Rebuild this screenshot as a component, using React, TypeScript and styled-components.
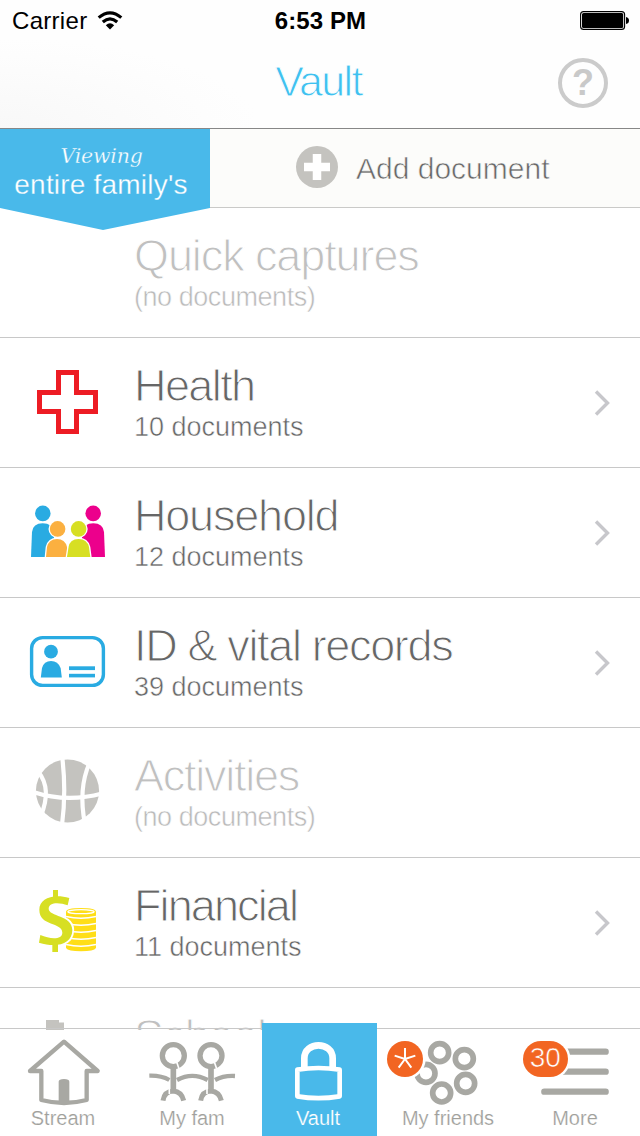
import React from "react";
import styled, { createGlobalStyle } from "styled-components";

const BLUE = "#49b9ea";
const GREY = "#a8a8a3";

const GlobalStyle = createGlobalStyle`
  * { box-sizing: border-box; }
  body {
    margin: 0;
    background: #fff;
    font-family: "Liberation Sans", Arial, sans-serif;
  }
  svg { display: block; overflow: visible; }
`;

const Screen = styled.div`
  position: relative;
  width: 640px;
  height: 1136px;
  overflow: hidden;
  background: #fff;
`;

/* A light cut of the face: the outline is trimmed with the surface colour. */
const LightText = styled.span<{
  $size: number;
  $line: number;
  $color: string;
  $trim?: number;
  $surface?: string;
  $spacing?: number;
}>`
  display: block;
  white-space: nowrap;
  font-size: ${(p) => p.$size}px;
  line-height: ${(p) => p.$line}px;
  color: ${(p) => p.$color};
  letter-spacing: ${(p) => p.$spacing ?? 0}px;
  -webkit-text-stroke: ${(p) => p.$trim ?? 0}px ${(p) => p.$surface ?? "#fff"};
`;

const Header = styled.header`
  height: 129px;
  border-bottom: 1px solid #878787;
  background: radial-gradient(ellipse 260px 90px at 0 128px, #f8f8f8, #fdfdfd 80%, #fefefe);
`;

const StatusBar = styled.div`
  display: grid;
  grid-template-columns: 1fr auto 1fr;
  align-items: center;
  height: 40px;
  padding: 0 11px 0 12px;
`;

const Carrier = styled.div`
  display: flex;
  align-items: center;
  gap: 10px;
  font-size: 24px;
  line-height: 41px;
  color: #000;
  letter-spacing: 0.3px;
`;

const Clock = styled.div`
  font-size: 24px;
  font-weight: 700;
  line-height: 41px;
  letter-spacing: 0.1px;
`;

const BatterySlot = styled.div`
  display: flex;
  justify-content: flex-end;
`;

const NavBar = styled.div`
  display: grid;
  grid-template-columns: 1fr auto 1fr;
  align-items: center;
  height: 86px;
  padding: 0 32px;
`;

const NavTitle = styled(LightText)`
  padding: 0 3px 4px 0;
`;

const HelpButton = styled.button`
  justify-self: end;
  width: 50px;
  height: 50px;
  padding: 0;
  border: 4px solid #cbcbcb;
  border-radius: 50%;
  background: transparent;
  color: #c9c9c9;
  font: 700 36px/42px "Liberation Sans", Arial, sans-serif;
`;

const Toolbar = styled.div`
  display: flex;
  height: 79px;
  border-bottom: 1px solid #cacac8;
  background: #fcfcfa;
`;

const Ribbon = styled.div`
  z-index: 1;
  width: 210px;
  height: 101px;
  padding-top: 13px;
  background: ${BLUE};
  clip-path: polygon(0 0, 100% 0, 100% 79px, 103px 100%, 0 79px);
  text-align: center;
`;

const RibbonCaption = styled(LightText)`
  padding-right: 7px;
  font-family: "DejaVu Serif", serif;
  font-style: italic;
`;

const RibbonName = styled(LightText)`
  padding-right: 8px;
`;

const AddButton = styled.div`
  display: flex;
  align-items: center;
  gap: 18px;
  padding: 0 0 2px 86px;
`;

const AddLabel = styled(LightText)`
  padding-top: 3px;
`;

const Row = styled.div`
  display: flex;
  height: 130px;
  border-bottom: 1px solid #c8c8c8;
`;

const RowIcon = styled.div`
  width: 134px;
  height: 129px;
`;

const RowText = styled.div`
  flex: 1;
  padding-top: 23px;
`;

const ChevronSlot = styled.div`
  width: 47px;
  padding-top: 51px;
`;

const TabBar = styled.nav`
  position: absolute;
  left: 0;
  bottom: 0;
  display: flex;
  align-items: flex-end;
  width: 640px;
  height: 108px;
  border-top: 1px solid #c8c8c8;
  background: linear-gradient(transparent 1px, #fff 1px);
`;

const Tab = styled.div<{ $width: number; $active?: boolean; $shift?: number }>`
  position: relative;
  width: ${(p) => p.$width}px;
  height: ${(p) => (p.$active ? 113 : 107)}px;
  padding-top: ${(p) => (p.$active ? 6 : 0)}px;
  flex: none;
  background: ${(p) => (p.$active ? BLUE : "transparent")};
  text-align: center;
  & > span:last-child { padding-right: ${(p) => p.$shift ?? 0}px; }
`;

const CountBadge = styled.div`
  position: absolute;
  left: 4px;
  top: 12px;
  width: 44.5px;
  height: 36px;
  border-radius: 18px;
  background: #f26522;
  box-shadow: 0 0 0 2.5px #fff;
`;

const Wifi = () => (
  <svg width="26" height="20" viewBox="0 0 26 20">
    <g fill="none" stroke="#000" strokeWidth="3.2">
      <path d="M1.7 6.6 Q13 -3 24.3 6.6" />
      <path d="M5.8 11 Q13 4.6 20.2 11" />
    </g>
    <path d="M8.8 14.2 Q13 10.4 17.2 14.2 L13 18.6 Z" />
  </svg>
);

const Battery = () => (
  <svg width="49" height="19" viewBox="0 0 49 19">
    <rect x="0.6" y="0.6" width="44" height="17.8" rx="3" fill="none" stroke="#000" strokeWidth="1.1" />
    <rect x="2" y="2" width="41.2" height="15" rx="1.6" />
    <path d="M46 6 Q49 6.5 49 9.5 T46 13 Z" />
  </svg>
);

const Plus = () => (
  <svg width="42" height="42" viewBox="0 0 42 42">
    <circle cx="21" cy="21" r="21" fill="#c4c3bf" />
    <path d="M21 8V34M8 21H34" stroke="#fff" strokeWidth="8.5" />
  </svg>
);

const Chevron = () => (
  <svg width="18" height="28" viewBox="0 0 18 28">
    <path d="M3 2.5 L14.5 14 L3 25.5" fill="none" stroke="#c7c7cb" strokeWidth="3.4" />
  </svg>
);

const Glyph = ({ top, children }: { top: number; children?: React.ReactNode }) => (
  <svg width="134" height="129" viewBox={`0 ${top} 134 129`}>{children}</svg>
);

const HealthIcon = () => (
  <Glyph top={338}>
    <path
      d="M58.5 372.5H76.5V392.5H95.5V411.5H76.5V431.5H58.5V411.5H39.5V392.5H58.5Z"
      fill="none"
      stroke="#ed1c24"
      strokeWidth="5"
    />
  </Glyph>
);

const HouseholdIcon = () => (
  <Glyph top={468}>
    <g fill="#29abe2">
      <circle cx="42.8" cy="513.4" r="7.8" />
      <path d="M31 557 L32 532 Q33 523.3 42.7 523.3 T54 532 V557Z" />
    </g>
    <g fill="#ec008c">
      <circle cx="93.2" cy="513.4" r="7.8" />
      <path d="M105 557 L104 532 Q103 523.3 93.3 523.3 T82 532 V557Z" />
    </g>
    <g fill="#fbb040" stroke="#fff" strokeWidth="2.6" paintOrder="stroke">
      <path d="M46 557 L47 547 Q49 539 57 539 T67 547 L68 557Z" />
      <circle cx="57.6" cy="528.9" r="7.8" />
    </g>
    <g fill="#d7df23" stroke="#fff" strokeWidth="2.6" paintOrder="stroke">
      <path d="M67 557 L68.6 547 Q70 539 78.5 539 T89 547 L90.3 557Z" />
      <circle cx="78.6" cy="528.9" r="7.8" />
    </g>
    <rect x="28" y="557" width="80" height="3" fill="#fff" />
  </Glyph>
);

const IdIcon = () => (
  <Glyph top={598}>
    <rect x="31.6" y="637.6" width="71.8" height="47.8" rx="11" fill="none" stroke="#29abe2" strokeWidth="3.4" />
    <g fill="#29abe2">
      <circle cx="51" cy="651.7" r="6.9" />
      <path d="M40.8 677.5 L42 668 Q44 661 51 661 T60.6 668 L61.8 677.5Z" />
      <rect x="69" y="666.3" width="26" height="3.8" />
      <rect x="69" y="673.8" width="26" height="3.6" />
    </g>
  </Glyph>
);

const BallIcon = () => (
  <Glyph top={728}>
    <circle cx="67.5" cy="791" r="31.6" fill="#c4c3bf" />
    <g fill="none" stroke="#fff" strokeWidth="4.2">
      <path d="M62.2 757 Q66.4 791 62 825" />
      <path d="M89.5 763 Q78 789 85 824" />
      <path d="M38.5 772 Q52 789 40.8 816" />
      <path d="M33 792 Q67 803 102 793.5" />
    </g>
  </Glyph>
);

const MoneyIcon = () => (
  <Glyph top={858}>
    <path d="M66 912 Q66 908 81 908 T96 912 V948 Q94 951.3 81 951.3 T66 948Z" fill="#ffde17" />
    <g fill="none" stroke="#fff" strokeWidth="1.3">
      <ellipse cx="81" cy="911.7" rx="13.2" ry="2" />
      <path d="M66 916.5 Q81 920 96 916.5M66 923.5 Q81 927 96 923.5M66 930.5 Q81 934 96 930.5M66 937.5 Q81 941 96 937.5M66 944.5 Q81 948 96 944.5" />
    </g>
    <g transform="translate(20 880) scale(0.33333)" fill="#d7df23">
      <path
        d="M148 54C100 40 58 55 58 89C58 140 127 125 127 158C127 180 90 178 61 165L57 188C110 205 157 192 157 150C157 105 86 110 86 86C86 66 118 66 143 76Z"
        stroke="#fff"
        strokeWidth="11"
        paintOrder="stroke"
      />
      <path d="M99 30H114V60H99ZM97 185H114V216H97Z" />
    </g>
  </Glyph>
);

const SchoolIcon = () => (
  <Glyph top={988}>
    <path d="M46 1020H59V1022.5H64V1050H46Z" fill="#c4c3bf" />
  </Glyph>
);

const TabIcon = ({ left, width, origin, children }: { left: number; width: number; origin: number; children: React.ReactNode }) => (
  <svg width={width} height="75" viewBox={`${left} 1029 ${width} 75`}>
    <g transform={`translate(${origin} 1010) scale(0.33333)`} fill="none">{children}</g>
  </svg>
);

const Person = ({ x }: { x: number }) => (
  <g transform={`translate(${x} 0)`}>
    <circle cx="0" cy="137" r="33" stroke={GREY} strokeWidth="16" />
    <path d="M10 156L19 182" stroke="#fff" strokeWidth="5" />
    <path d="M-31 272Q-27 244 0 243Q25 245 31 272" stroke={GREY} strokeWidth="15" />
    <path d="M-12 232V252" stroke="#fff" strokeWidth="5" />
    <path d="M0 163V247" stroke={GREY} strokeWidth="17" />
  </g>
);

const rows = [
  { title: "Quick captures", note: "(no documents)", empty: true, icon: <Glyph top={208} />, spacing: -1.1 },
  { title: "Health", note: "10 documents", icon: <HealthIcon />, spacing: -1.6 },
  { title: "Household", note: "12 documents", icon: <HouseholdIcon />, spacing: -1.2 },
  { title: "ID & vital records", note: "39 documents", icon: <IdIcon />, spacing: -1.35 },
  { title: "Activities", note: "(no documents)", empty: true, icon: <BallIcon />, spacing: -1.25 },
  { title: "Financial", note: "11 documents", icon: <MoneyIcon />, spacing: -1.9 },
  { title: "School", note: "(no documents)", empty: true, icon: <SchoolIcon />, spacing: -0.9 },
];

const TabLabel = ({ children, active }: { children: string; active?: boolean }) => (
  <LightText $size={20} $line={28} $color={active ? "#fff" : "#a0a09b"} $trim={0.2} $surface={active ? BLUE : "#fff"}>
    {children}
  </LightText>
);

export default function App() {
  return (
    <Screen>
      <GlobalStyle />
      <Header>
        <StatusBar>
          <Carrier>Carrier <Wifi /></Carrier>
          <Clock>6:53 PM</Clock>
          <BatterySlot><Battery /></BatterySlot>
        </StatusBar>
        <NavBar>
          <span />
          <NavTitle $size={43} $line={82} $color="#3fc1f0" $trim={1} $surface="#fefefe" $spacing={-1.7}>Vault</NavTitle>
          <HelpButton>?</HelpButton>
        </NavBar>
      </Header>
      <Toolbar>
        <Ribbon>
          <RibbonCaption $size={20.5} $line={28} $color="#fff" $trim={0.3} $surface={BLUE} $spacing={-0.2}>Viewing</RibbonCaption>
          <RibbonName $size={28} $line={29} $color="#fff" $trim={0.3} $surface={BLUE} $spacing={0.2}>entire family's</RibbonName>
        </Ribbon>
        <AddButton>
          <Plus />
          <AddLabel $size={30} $line={40} $color="#686868" $trim={0.6} $surface="#fcfcfa">Add document</AddLabel>
        </AddButton>
      </Toolbar>
      {rows.map((r) => (
        <Row key={r.title}>
          <RowIcon>{r.icon}</RowIcon>
          <RowText>
            <LightText $size={45} $line={50} $color={r.empty ? "#c0c0c0" : "#666"} $trim={1.1} $spacing={r.spacing}>{r.title}</LightText>
            <LightText $size={27} $line={32} $color={r.empty ? "#bababa" : "#666"} $trim={0.5} $spacing={r.empty ? -0.45 : 0}>{r.note}</LightText>
          </RowText>
          {!r.empty && <ChevronSlot><Chevron /></ChevronSlot>}
        </Row>
      ))}
      <TabBar>
        <Tab $width={126}>
          <TabIcon left={0} width={126} origin={0}>
            <path d="M90 183L192 95L293 183H260V270Q192 288 124 270V183Z" stroke={GREY} strokeWidth="13" strokeLinejoin="round" />
            <path d="M176 276V215Q176 207 192 207T208 215V276Z" fill={GREY} />
          </TabIcon>
          <TabLabel>Stream</TabLabel>
        </Tab>
        <Tab $width={136} $shift={4}>
          <TabIcon left={126} width={136} origin={0}>
            <path d="M448 197Q484 196 508 210M531 210Q577 185 623 210M645 210Q671 196 705 198" stroke={GREY} strokeWidth="13" />
            <Person x={520} />
            <Person x={633} />
          </TabIcon>
          <TabLabel>My fam</TabLabel>
        </Tab>
        <Tab $width={115} $active $shift={3}>
          <TabIcon left={262} width={115} origin={250}>
            <path d="M142 179Q205 169 269 179V259Q205 270 142 259Z" stroke="#fff" strokeWidth="14" strokeLinejoin="round" />
            <path d="M163 174V145C163 93 248 93 248 145V174" stroke="#fff" strokeWidth="20" />
          </TabIcon>
          <TabLabel active>Vault</TabLabel>
        </Tab>
        <Tab $width={142}>
          <TabIcon left={377} width={142} origin={250}>
            <g stroke={GREY} strokeWidth="17">
              <circle cx="569" cy="128" r="27" />
              <circle cx="643" cy="146" r="27" />
              <circle cx="647" cy="220" r="27" />
              <circle cx="575" cy="249" r="27" />
              <circle cx="528" cy="190" r="27" />
            </g>
            <circle cx="465" cy="147" r="62" fill="#fff" />
            <circle cx="465" cy="147" r="54" fill="#f26522" />
            <path d="M465 147V114M465 147L496 137M465 147L484 173M465 147L446 173M465 147L434 137" stroke="#fff" strokeWidth="6" />
          </TabIcon>
          <TabLabel>My friends</TabLabel>
        </Tab>
        <Tab $width={112}>
          <TabIcon left={519} width={112} origin={480}>
            <path d="M193 125H377M193 185H377M193 245H377" stroke={GREY} strokeWidth="19" strokeLinecap="round" />
          </TabIcon>
          <CountBadge>
            <LightText $size={28} $line={34} $color="#fff" $trim={0.6} $surface="#f26522">30</LightText>
          </CountBadge>
          <TabLabel>More</TabLabel>
        </Tab>
      </TabBar>
    </Screen>
  );
}
